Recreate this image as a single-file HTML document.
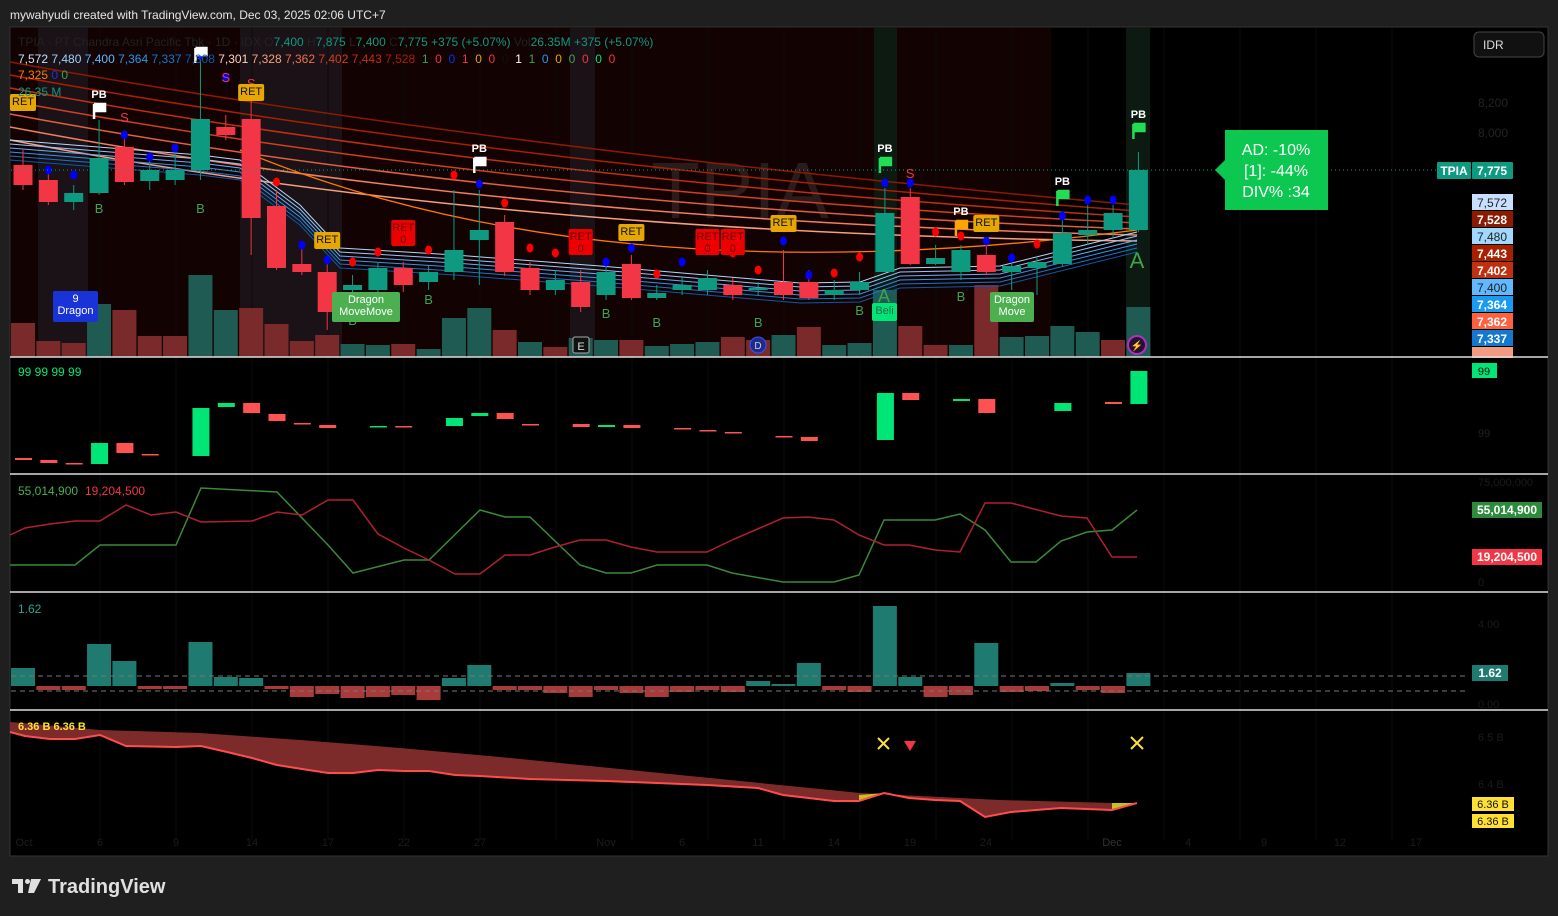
<!DOCTYPE html>
<html><head><meta charset="utf-8">
<style>
html,body{margin:0;padding:0;background:#1f1f1f;width:1558px;height:916px;overflow:hidden;font-family:"Liberation Sans",sans-serif}
#hdr{position:absolute;left:10px;top:8px;color:#e6e6e6;font-size:12px}
svg{position:absolute;left:0;top:0}
</style></head><body>
<div id="hdr">mywahyudi created with TradingView.com, Dec 03, 2025 02:06 UTC+7</div>
<svg id="s" width="1558" height="916" xmlns="http://www.w3.org/2000/svg" font-family="Liberation Sans, sans-serif"></svg>
<script>
var o=[];
function a(t){o.push(t)}
function X(i){return 23+25.35*i}
a('<rect x="10" y="27" width="1538" height="829" fill="#000" stroke="#333" />');
a('<rect x="11" y="28" width="1040" height="329" fill="#120202"/>');
[[38,88],[240,342],[570,595],[874,897],[1126,1150]].forEach(function(b){a('<rect x="'+b[0]+'" y="28" width="'+(b[1]-b[0])+'" height="329" fill="'+(b[0]>870?'#0c1a12':'#1a1216')+'"/>')});
for(var gx=100;gx<1468;gx+=76)a('<line x1="'+gx+'" y1="28" x2="'+gx+'" y2="840" stroke="#0c0c0c"/>');
a('<text x="740" y="218" font-size="80" fill="#2a1c1c" text-anchor="middle">TPIA</text>');
var vol=[[323,0],[341,0],[343,0],[304,1],[310,0],[336,0],[336,0],[275,1],[310,1],[308,0],[324,0],[341,0],[335,0],[344,1],[345,1],[344,0],[349,1],[318,1],[308,1],[330,0],[342,1],[347,0],[338,1],[340,1],[340,0],[346,1],[344,1],[342,1],[337,0],[340,0],[335,1],[327,0],[345,1],[343,1],[290,1],[326,0],[345,0],[345,1],[285,0],[337,1],[336,1],[326,1],[332,1],[340,0],[307,1]];
vol.forEach(function(v,i){a('<rect x="'+(X(i)-12)+'" y="'+v[0]+'" width="24" height="'+(357-v[0])+'" fill="'+(v[1]?'#1f5a53':'#7a2a2a')+'"/>')});
var rc=['#8b1a00','#a82000','#c03010','#d04020','#e06040','#f08060','#f4a080'];
rc.forEach(function(c,k){var y0=62+13*k,y1=205+6*k;a('<path d="M10 '+y0+' Q 500 '+(150+14*k)+' 1137 '+y1+'" stroke="'+c+'" stroke-width="1.5" fill="none"/>')});
a('<path d="M240 150 Q 600 300 1137 230" stroke="#ff7a00" stroke-width="1.3" fill="none"/>');
var bc=['#b0d8ff','#90c8ff','#60b0ff','#2a98f0','#1478d0','#0a5aa8'];
bc.forEach(function(c,k){var d=k*4;a('<polyline points="10,'+(140+d)+' 200,'+(155+d)+' 240,'+(160+d)+' 300,'+(205+d)+' 340,'+(248+d)+' 455,'+(255+d)+' 600,'+(266+d)+' 800,'+(283+d)+' 860,'+(282+d)+' 900,'+(268+d)+' 1000,'+(266+d)+' 1137,'+(232+d)+'" stroke="'+c+'" stroke-width="1" fill="none"/>')});
var C=[[165,185,0,150,190],[180,202,0,170,205],[193,202,1,185,210],[158,193,1,120,195],[147,182,0,135,185],[170,181,1,160,190],[170,180,1,150,185],[119,170,1,55,180],[127,135,0,115,140],[119,218,0,100,255],[206,268,0,190,270],[264,272,0,248,275],[272,312,0,262,330],[285,290,1,275,300],[268,290,1,262,300],[268,285,0,262,292],[272,282,1,265,290],[250,272,1,190,280],[230,240,1,190,285],[222,272,0,215,276],[268,290,0,262,295],[280,290,1,270,295],[282,307,0,270,312],[272,295,1,262,300],[264,298,0,255,300],[293,298,1,285,300],[285,290,1,276,295],[278,290,1,270,295],[285,295,0,278,300],[288,290,1,282,296],[282,295,0,250,300],[282,298,0,270,300],[290,295,1,280,300],[282,290,1,272,295],[213,272,1,188,272],[197,264,0,188,265],[258,264,1,245,265],[250,272,1,245,280],[255,272,0,245,275],[266,272,1,258,290],[262,268,1,258,295],[233,264,1,220,266],[230,235,1,205,245],[213,230,1,205,238],[170,230,1,152,232]];
C.forEach(function(c,i){var x=X(i),col=c[2]?'#0e9981':'#f23645';a('<line x1="'+x+'" y1="'+c[3]+'" x2="'+x+'" y2="'+c[4]+'" stroke="'+col+'"/>');a('<rect x="'+(x-9.5)+'" y="'+c[0]+'" width="19" height="'+Math.max(2,c[1]-c[0])+'" fill="'+col+'"/>')});
var dots=[[1,170,'#00f'],[2,175,'#00f'],[4,135,'#00f'],[5,157,'#00f'],[6,148,'#00f'],[7,55,'#00f'],[8,77,'#00f'],[10,182,'#f00'],[11,245,'#00f'],[12,260,'#00f'],[13,262,'#f00'],[14,252,'#f00'],[16,250,'#f00'],[17,175,'#f00'],[18,184,'#00f'],[19,203,'#f00'],[20,248,'#f00'],[21,253,'#f00'],[23,262,'#00f'],[24,248,'#00f'],[25,274,'#f00'],[26,262,'#00f'],[28,253,'#f00'],[29,270,'#f00'],[30,241,'#00f'],[31,275,'#00f'],[32,273,'#f00'],[33,257,'#f00'],[34,183,'#00f'],[35,183,'#00f'],[36,232,'#f00'],[37,236,'#f00'],[38,241,'#00f'],[39,258,'#00f'],[40,244,'#f00'],[41,216,'#00f'],[42,200,'#00f'],[43,200,'#00f']];
dots.forEach(function(d){a('<ellipse cx="'+X(d[0])+'" cy="'+d[1]+'" rx="3.5" ry="4.5" fill="'+d[2]+'"/>')});
function tx(x,y,s,c,sz,anc,w){a('<text x="'+x+'" y="'+y+'" font-size="'+(sz||12)+'" fill="'+c+'" text-anchor="'+(anc||'middle')+'"'+(w?' font-weight="bold"':'')+'>'+s+'</text>')}
function box(x,y,w,h,bg,lines,fc,fs){a('<rect x="'+x+'" y="'+y+'" width="'+w+'" height="'+h+'" rx="2" fill="'+bg+'"/>');lines.forEach(function(l,k){tx(x+w/2,y+11+k*12,l,fc,fs||11)})}
[[3,213],[7,213],[13,325],[16,304],[23,318],[25,327],[29,327],[33,315],[37,301]].forEach(function(b){tx(X(b[0]),b[1],'B','#3fa34d',13)});
[[4,122],[8,82],[35,178],[9,88]].forEach(function(b){tx(X(b[0]),b[1],'S','#f23645',13)});
tx(1137,268,'A','#3fa34d',22);tx(884,302,'A','#3fa34d',18);
[[3,98,'#fff'],[18,152,'#fff'],[34,152,'#22dd55'],[37,215,'#ffa500'],[41,185,'#22dd55'],[44,118,'#22dd55'],[7,42,'#fff']].forEach(function(p){var x=X(p[0]);if(p[0]!=7)tx(x,p[1],'PB','#fff',11,'middle',1);a('<path d="M'+(x-5)+' '+(p[1]+6)+' v15 M'+(x-5)+' '+(p[1]+6)+' h11 v7 h-11" stroke="'+p[2]+'" stroke-width="2.5" fill="'+p[2]+'"/>')});
[[0,94,'#e6a800','RET'],[9,84,'#e6a800','RET'],[12,232,'#e6a800','RET'],[24,224,'#e6a800','RET'],[30,215,'#e6a800','RET'],[38,215,'#e6a800','RET']].forEach(function(r){box(X(r[0])-13,r[1],26,17,r[2],[r[3]],'#111')});
[[15,220],[22,229],[27,229],[28,229]].forEach(function(r){box(X(r[0])-12,r[1],24,26,'#ee0000',['RET','0'],'#600',11)});
box(53,291,45,31,'#1a33d6',['9','Dragon'],'#fff');
box(332,292,68,30,'#4caf50',['Dragon','MoveMove'],'#fff');
box(990,292,44,30,'#4caf50',['Dragon','Move'],'#fff');
box(872,303,25,18,'#00e676',['Beli'],'#1a6a4a');
a('<rect x="573" y="337" width="16" height="16" rx="2" fill="#111" stroke="#aaa"/>');tx(581,350,'E','#ddd',11);
a('<circle cx="758" cy="345" r="8" fill="#1f2a8a" stroke="#3355ff"/>');tx(758,349,'D','#ccd',10);
a('<circle cx="1137" cy="345" r="9" fill="#2a1030" stroke="#b030c0" stroke-width="2"/>');tx(1137,349,'⚡','#d040e0',10);
a('<line x1="11" y1="170" x2="1436" y2="170" stroke="#0e9981" stroke-dasharray="1 3"/>');
a('<path d="M1225 130 h103 v80 h-103 v-30 l-10 -10 l10 -10z" fill="#0cc750"/>');
tx(1276,155,'AD: -10%','#fff',16);tx(1276,176,'[1]: -44%','#fff',16);tx(1276,197,'DIV% :34','#fff',16);
a('<text x="18" y="46" font-size="12" fill="#0e9981"><tspan fill="#222">TPIA · PT Chandra Asri Pacific Tbk · 1D · IDX  O</tspan>7,400  <tspan fill="#222">H</tspan>7,875  <tspan fill="#222">L</tspan>7,400  <tspan fill="#222">C</tspan>7,775  +375 (+5.07%)  <tspan fill="#222">Vol</tspan>26.35M  +375 (+5.07%)</text>');
a('<text x="18" y="63" font-size="12" xml:space="preserve"><tspan fill="#c8e0ff">7,572 </tspan><tspan fill="#a0d0ff">7,480 </tspan><tspan fill="#60b8ff">7,400 </tspan><tspan fill="#2a98f0">7,364 </tspan><tspan fill="#1478d0">7,337 </tspan><tspan fill="#0a5aa8">7,308 </tspan><tspan fill="#ffd0c0">7,301 </tspan><tspan fill="#f4a080">7,328 </tspan><tspan fill="#f07050">7,362 </tspan><tspan fill="#d04020">7,402 </tspan><tspan fill="#c03010">7,443 </tspan><tspan fill="#a82000">7,528 </tspan><tspan fill="#3fa34d"> 1 </tspan><tspan fill="#f23645"> 0 </tspan><tspan fill="#0033ff"> 0 </tspan><tspan fill="#f23645"> 1 </tspan><tspan fill="#e6a800"> 0 </tspan><tspan fill="#f23645"> 0 </tspan><tspan fill="#111"> 0 </tspan><tspan fill="#fff"> 1 </tspan><tspan fill="#3fa34d"> 1 </tspan><tspan fill="#2a98f0"> 0 </tspan><tspan fill="#e6a800"> 0 </tspan><tspan fill="#3fa34d"> 0 </tspan><tspan fill="#f23645"> 0 </tspan><tspan fill="#00e676"> 0 </tspan><tspan fill="#f23645"> 0</tspan></text>');
a('<text x="18" y="79" font-size="12" fill="#ff7a00">7,325 <tspan fill="#1a33d6"> 0 </tspan><tspan fill="#3fa34d"> 0</tspan></text>');
tx(18,96,'26.35 M','#0e9981',12,'start');
a('<rect x="1474" y="32" width="70" height="25" rx="5" fill="#111" stroke="#444"/>');tx(1483,49,'IDR','#ddd',12,'start');
tx(1478,107,'8,200','#222',12,'start');tx(1478,137,'8,000','#222',12,'start');
a('<rect x="1437" y="162" width="34" height="17" rx="1" fill="#0e9981"/>');tx(1454,175,'TPIA','#fff',12,'middle',1);
a('<rect x="1472" y="162" width="41" height="17" rx="1" fill="#0e9981"/>');tx(1492,175,'7,775','#fff',12,'middle',1);
[['7,572','#c8e0ff','#222'],['7,528','#8b1a00','#fff'],['7,480','#a0d8ff','#222'],['7,443','#a82000','#fff'],['7,402','#c03010','#fff'],['7,400','#60b8ff','#222'],['7,364','#1a9af0','#fff'],['7,362','#ff6040','#fff'],['7,337','#1478d0','#fff'],['7,328','#f49a80','#222']].forEach(function(p,k){var y=194+k*17;a('<rect x="1472" y="'+y+'" width="41" height="'+(k==9?11:16)+'" fill="'+p[1]+'"/>');if(k<9)tx(1492,y+13,p[0],p[2],12,'middle',p[2]=='#fff')});
[357,474,592,710].forEach(function(y){a('<line x1="10" y1="'+y+'" x2="1548" y2="'+y+'" stroke="#ddd" stroke-width="1.5"/>')});
tx(18,376,'99  99  99  99','#00e676',12,'start');
var P2=[[0,458,460,0],[1,460,463,0],[2,463,464,0],[3,443,464,1],[4,443,453,0],[5,454,455,0],[7,408,456,1],[8,403,407,1],[9,403,413,0],[10,414,421,0],[11,423,424,0],[12,425,428,0],[14,426,427,1],[15,426,427,0],[17,418,426,1],[18,413,416,1],[19,413,419,0],[20,424,425,0],[22,424,427,0],[23,425,427,1],[24,425,428,0],[26,428,429,0],[27,430,431,0],[28,432,433,0],[30,436,437,0],[31,437,441,0],[34,393,440,1],[35,393,400,0],[37,399,401,1],[38,399,413,0],[41,403,411,1],[43,402,404,0],[44,371,404,1]];
P2.forEach(function(p){a('<rect x="'+(X(p[0])-8)+'" y="'+p[1]+'" width="17" height="'+Math.max(1.5,p[2]-p[1])+'" fill="'+(p[3]?'#00e676':'#ff5252')+'"/>')});
a('<rect x="1472" y="363" width="25" height="15" fill="#00e676"/>');tx(1484,375,'99','#111',11);tx(1478,437,'99','#222',11,'start');
tx(18,495,'55,014,900','#4caf50',12,'start');tx(85,495,'19,204,500','#f23645',12,'start');
a('<polyline fill="none" stroke="#3a8a3a" stroke-width="1.5" points="10,565 75,565 100,545 176,545 201,488 277,492 328,545 353,573 404,560 429,560 480,510 505,517 530,517 580,565 606,573 631,573 657,565 707,565 732,573 783,582 834,582 859,575 884,520 935,520 960,514 985,530 1011,562 1036,562 1061,541 1087,532 1112,530 1137,510"/>');
a('<polyline fill="none" stroke="#b02030" stroke-width="1.5" points="10,535 25,528 50,524 75,521 100,521 126,505 151,515 176,512 201,522 252,521 277,512 302,515 328,500 353,500 378,534 404,548 429,560 455,574 480,574 505,555 530,555 555,547 580,540 606,540 631,547 657,552 707,552 732,540 783,518 808,517 834,520 859,535 884,545 909,545 935,550 960,552 985,503 1011,503 1061,516 1087,518 1112,557 1137,557"/>');
a('<rect x="1472" y="502" width="70" height="16" fill="#2e8b3e"/>');tx(1507,514,'55,014,900','#fff',12,'middle',1);
a('<rect x="1472" y="549" width="70" height="16" fill="#f23645"/>');tx(1507,561,'19,204,500','#fff',12,'middle',1);
tx(1478,486,'75,000,000','#1a1a1a',11,'start');tx(1478,586,'0','#1a1a1a',11,'start');
tx(18,613,'1.62','#26a69a',12,'start');
var P4=[668,690,690,644,661,689,689,642,677,678,689,697,694,698,697,695,700,678,665,690,690,693,697,690,693,697,692,690,692,681,684,663,690,692,606,677,697,695,643,692,691,683,690,693,673];
P4.forEach(function(y,i){var up=y<686;a('<rect x="'+(X(i)-12)+'" y="'+(up?y:686)+'" width="24" height="'+Math.abs(686-y)+'" fill="'+(up?'#1f7a70':'#a83a3a')+'"/>')});
a('<line x1="11" y1="676" x2="1468" y2="676" stroke="#777" stroke-dasharray="5 4"/><line x1="11" y1="691" x2="1468" y2="691" stroke="#777" stroke-dasharray="5 4"/>');
a('<rect x="1472" y="665" width="36" height="16" fill="#1f7a70"/>');tx(1490,677,'1.62','#fff',12,'middle',1);
tx(1478,628,'4.00','#1a1a1a',11,'start');tx(1478,708,'0.00','#1a1a1a',11,'start');
var up5='10,722 100,730 200,733 300,740 400,748 500,757 600,767 700,777 800,787 860,793 900,795 1000,800 1112,803 1137,803';
var lo5='10,732 25,736 50,739 75,739 100,735 126,746 176,747 201,746 227,752 252,758 277,765 302,769 328,773 353,773 378,770 404,771 429,771 455,775 480,776 530,779 606,781 707,785 758,788 783,795 834,801 859,801 884,793 909,798 935,800 960,801 985,817 1011,812 1061,808 1112,810 1137,803';
var rev=up5.split(' ').reverse().join(' ');
a('<polygon points="'+lo5+' '+rev+'" fill="#7d2a2a"/>');
a('<polygon points="859,801 884,793 859,795" fill="#c8c020"/><polygon points="1112,810 1137,803 1112,803" fill="#c8c020"/>');
a('<polyline fill="none" stroke="#ff4d4d" stroke-width="2" points="'+lo5+'"/>');
tx(18,730,'6.36 B  6.36 B','#ffe135',11,'start',1);
a('<path d="M878 738 l11 11 M889 738 l-11 11 M1131 737 l12 12 M1143 737 l-12 12" stroke="#ffe135" stroke-width="2"/>');
a('<path d="M904 741 h12 l-6 10z" fill="#f23645"/>');
a('<rect x="1472" y="797" width="42" height="14" fill="#ffe135"/><rect x="1472" y="814" width="42" height="14" fill="#ffe135"/>');tx(1493,808,'6.36 B','#111',11);tx(1493,825,'6.36 B','#111',11);
tx(1478,741,'6.5 B','#1a1a1a',11,'start');tx(1478,788,'6.4 B','#1a1a1a',11,'start');
[['Oct',24],['6',100],['9',176],['14',252],['17',328],['22',404],['27',480],['Nov',606],['6',682],['11',758],['14',834],['19',910],['24',986],['Dec',1112],['4',1188],['9',1264],['12',1340],['17',1416]].forEach(function(d){tx(d[1],846,d[0],d[0]=='Dec'?'#333':'#1c1c1c',11)});
a('<path d="M12 879 h11 v14 h-5 v-9 h-6z M31 879 h10 l-7 14 h-6z" fill="#e0e0e0"/>');
a('<circle cx="27.5" cy="881.5" r="2.5" fill="#e0e0e0"/>');
tx(48,893,'TradingView','#e0e0e0',20,'start',1);
document.getElementById('s').innerHTML=o.join('');
</script>
</body></html>
